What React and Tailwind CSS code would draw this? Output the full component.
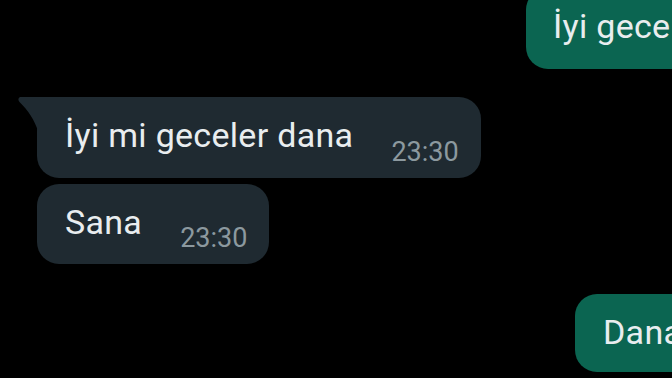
export default function App() {
  const font = { fontFamily: 'Roboto, "Noto Sans", sans-serif' };
  return (
    <div className="w-[672px] h-[378px] bg-black overflow-hidden flex flex-col" style={font}>
      {/* outgoing top, cut off */}
      <div className="ml-[526px] mt-[-12px] w-[220px] h-[81px] rounded-[22px] bg-[#0b6551] pl-[27px] pt-[18px]">
        <span className="block text-[34px] leading-[40px] tracking-[0.3px] text-[#e9edef] whitespace-nowrap">İyi geceler</span>
      </div>

      {/* incoming 1 with tail */}
      <div className="relative ml-[37px] mt-[28px] self-start h-[81px] rounded-[22px] rounded-tl-none bg-[#1f2a31] pl-[28px] pr-[22px] pt-[18px] pb-[11px] flex gap-[38px]">
        <svg className="absolute left-[-20px] top-0" width="21" height="34" viewBox="0 0 21 34">
          <path d="M21 0 V34 C18 24 11 13 2.5 5 Q0 2 3 0 Z" fill="#1f2a31" />
        </svg>
        <span className="text-[34px] leading-[40px] tracking-[0.3px] text-[#e9edef] whitespace-nowrap">İyi mi geceler dana</span>
        <span className="self-end text-[27px] leading-[30px] text-[#8c999f]">23:30</span>
      </div>

      {/* incoming 2 */}
      <div className="ml-[37px] mt-[6px] self-start h-[80px] rounded-[22px] bg-[#1f2a31] pl-[28px] pr-[22px] pt-[18px] pb-[11px] flex gap-[38px]">
        <span className="text-[34px] leading-[40px] tracking-[0.3px] text-[#e9edef] whitespace-nowrap">Sana</span>
        <span className="self-end text-[27px] leading-[30px] text-[#8c999f]">23:30</span>
      </div>

      {/* outgoing bottom, cut off */}
      <div className="ml-[575px] mt-[30px] w-[200px] shrink-0 h-[78px] rounded-[22px] bg-[#0b6551] pl-[28px] pt-[18px]">
        <span className="block text-[34px] leading-[40px] tracking-[0.3px] text-[#e9edef] whitespace-nowrap">Dana</span>
      </div>
    </div>
  );
}
